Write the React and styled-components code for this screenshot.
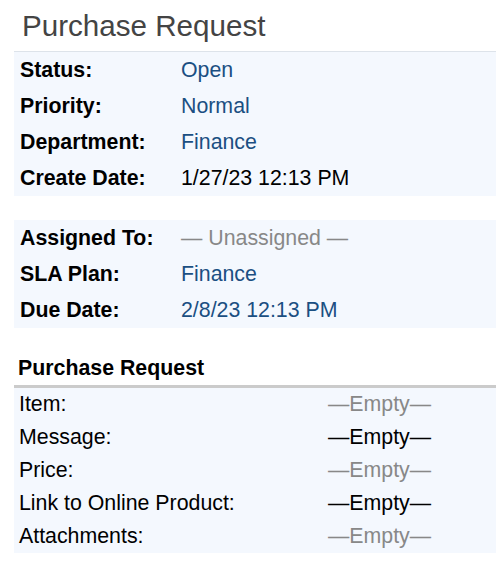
import React from "react";
import styled, { createGlobalStyle } from "styled-components";

const GlobalStyle = createGlobalStyle`
  html, body { margin: 0; padding: 0; background: #fff; }
  body { font-family: "Liberation Sans", Arial, sans-serif; color: #000; }
`;

const Page = styled.div`
  padding: 0 0 0 14px;
  width: 482px;
  overflow: hidden;
`;

const Title = styled.h1`
  margin: 0;
  padding: 9px 0 8px 8px;
  font-size: 29.6px;
  line-height: 34px;
  font-weight: 400;
  color: #444;
  border-bottom: 1px solid #dde3ea;
`;

const Panel = styled.div`
  background: #f4f8fe;
  display: grid;
  grid-template-columns: ${(p) => p.$labelWidth}px 1fr;
  grid-auto-rows: ${(p) => p.$rowHeight}px;
  padding-left: ${(p) => p.$pad}px;
  margin-top: ${(p) => p.$top || 0}px;
`;

const Label = styled.div`
  font-size: 21.33px;
  line-height: ${(p) => p.$rowHeight}px;
  font-weight: ${(p) => (p.$bold ? 700 : 400)};
  white-space: nowrap;
`;

const Value = styled.div`
  font-size: 21.33px;
  line-height: ${(p) => p.$rowHeight}px;
  white-space: nowrap;
  color: ${(p) => p.$color};
`;

const SectionHeading = styled.h2`
  margin: 28px 0 0;
  padding: 0 0 5px 4px;
  font-size: 21.33px;
  line-height: 24px;
  font-weight: 700;
  border-bottom: 3px solid #cbcbcb;
`;

const BLUE = "#1b4f82";
const GRAY = "#888";

const info1 = [
  ["Status:", "Open", BLUE],
  ["Priority:", "Normal", BLUE],
  ["Department:", "Finance", BLUE],
  ["Create Date:", "1/27/23 12:13 PM", "#000"],
];

const info2 = [
  ["Assigned To:", "— Unassigned —", GRAY],
  ["SLA Plan:", "Finance", BLUE],
  ["Due Date:", "2/8/23 12:13 PM", BLUE],
];

const fields = [
  ["Item:", GRAY],
  ["Message:", "#000"],
  ["Price:", GRAY],
  ["Link to Online Product:", "#000"],
  ["Attachments:", GRAY],
];

function InfoPanel({ rows, top }) {
  return (
    <Panel $labelWidth={161} $rowHeight={36} $pad={6} $top={top}>
      {rows.map(([l, v, c]) => (
        <React.Fragment key={l}>
          <Label $bold $rowHeight={36}>{l}</Label>
          <Value $rowHeight={36} $color={c}>{v}</Value>
        </React.Fragment>
      ))}
    </Panel>
  );
}

export default function App() {
  return (
    <>
      <GlobalStyle />
      <Page>
        <Title>Purchase Request</Title>
        <InfoPanel rows={info1} />
        <InfoPanel rows={info2} top={24} />
        <SectionHeading>Purchase Request</SectionHeading>
        <Panel $labelWidth={309} $rowHeight={33} $pad={5}>
          {fields.map(([l, c]) => (
            <React.Fragment key={l}>
              <Label $rowHeight={33}>{l}</Label>
              <Value $rowHeight={33} $color={c}>—Empty—</Value>
            </React.Fragment>
          ))}
        </Panel>
      </Page>
    </>
  );
}
